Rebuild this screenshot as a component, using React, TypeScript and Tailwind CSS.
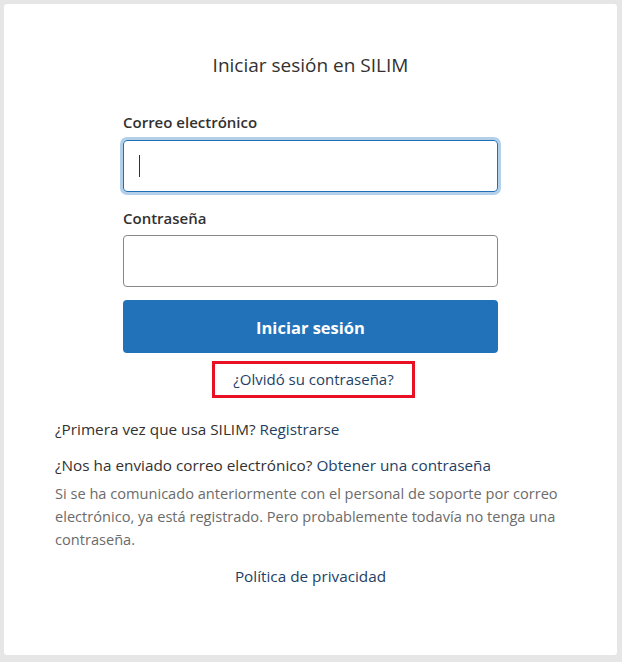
import React from "react";

export default function App() {
  return (
    <div
      className="w-[622px] h-[662px] bg-[#e6e6e6] p-[4px] pr-[5px] pb-[7px]"
      style={{ fontFamily: '"Open Sans", "Noto Sans", sans-serif' }}
    >
      <div className="h-full bg-white rounded-[3px] px-[51px] pt-[48px]">
        <h1 className="text-center text-[19px] leading-[26px] text-[#323130] font-normal">
          Iniciar sesión en SILIM
        </h1>

        <div className="mx-auto w-[375px] mt-[34px]">
          <label className="block text-[15px] leading-[20px] font-semibold text-[#323130]">
            Correo electrónico
          </label>
          <div className="mt-[8px] h-[52px] rounded-[4px] border border-[#1f6fb5] shadow-[0_0_0_3px_#b3d0ea] flex items-center pl-[15px]">
            <div className="w-px h-[22px] bg-[#323130]" />
          </div>

          <label className="block mt-[16px] text-[15px] leading-[20px] font-semibold text-[#323130]">
            Contraseña
          </label>
          <div className="mt-[7px] h-[52px] rounded-[4px] border border-[#8a8886]" />

          <button className="mt-[13px] w-full h-[53px] rounded-[4px] bg-[#2172b8] text-white text-[16.5px] leading-[26px] pt-[2px] font-bold">
            Iniciar sesión
          </button>

          <div className="flex mt-[8px] ml-[89px]">
            <div className="w-[203px] h-[37px] border-[3px] border-[#e81123] flex items-center justify-center text-[15px] text-[#1e3f66]">
              ¿Olvidó su contraseña?
            </div>
          </div>
        </div>

        <div className="mt-[21px] text-[15.3px] leading-[20px] text-[#323130]">
          ¿Primera vez que usa SILIM? <span className="text-[#1e3f66]">Registrarse</span>
        </div>
        <div className="mt-[16px] text-[15.3px] leading-[20px] text-[#323130]">
          ¿Nos ha enviado correo electrónico?{" "}
          <span className="text-[#1e3f66]">Obtener una contraseña</span>
        </div>
        <p className="mt-[7px] w-[512px] text-[14.6px] leading-[23px] text-[#6b6b6b]">
          Si se ha comunicado anteriormente con el personal de soporte por correo electrónico, ya
          está registrado. Pero probablemente todavía no tenga una contraseña.
        </p>
        <div className="mt-[15px] text-center text-[15.3px] leading-[20px] text-[#1e3f66]">
          Política de privacidad
        </div>
      </div>
    </div>
  );
}
